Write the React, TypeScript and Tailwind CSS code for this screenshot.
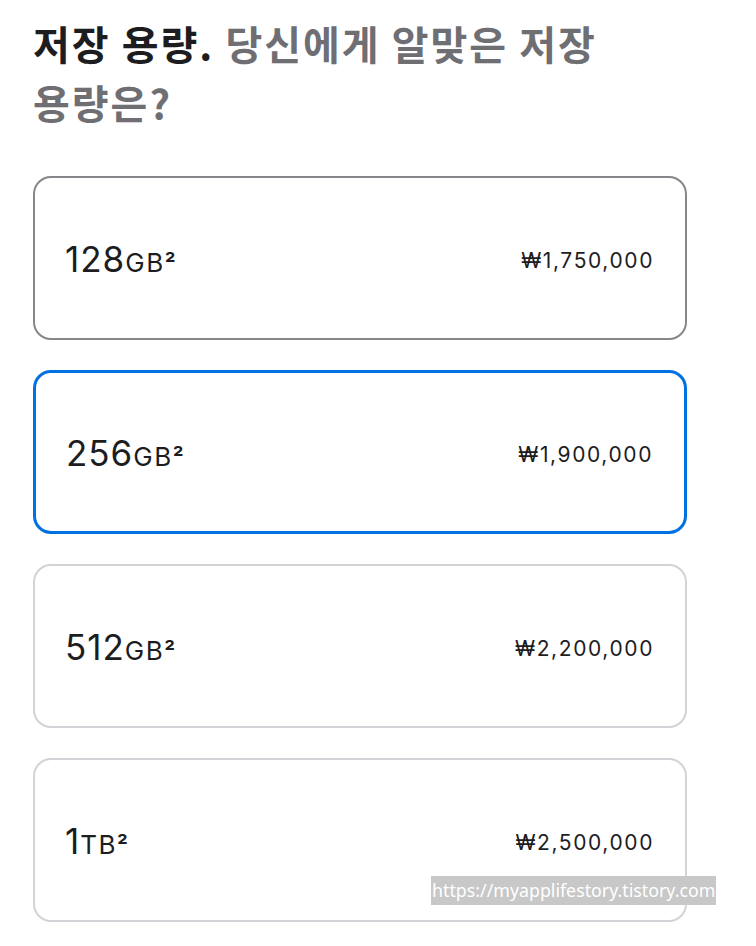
import React, { useState } from 'react';

type Option = {
    id: string;
    size: string;
    unit: string;
    price: string;
};

const options: Option[] = [
    { id: '128', size: '128', unit: 'GB', price: '₩1,750,000' },
    { id: '256', size: '256', unit: 'GB', price: '₩1,900,000' },
    { id: '512', size: '512', unit: 'GB', price: '₩2,200,000' },
    { id: '1tb', size: '1', unit: 'TB', price: '₩2,500,000' },
];

const App: React.FC = () => {
    const [selected, setSelected] = useState('256');
    const hovered = '128';

    return (
        <div className="relative min-h-[946px] bg-white px-[33px] pt-[14px] font-['Inter','Noto_Sans_CJK_KR',sans-serif] text-[#1d1d1f]">
            <h2 className="w-[620px] text-[40px] font-bold leading-[59px] tracking-[2px] font-['Noto_Sans_CJK_KR','Inter',sans-serif]">
                <span className="text-[#1d1d1f]">저장 용량.</span>{' '}
                <span className="text-[#6e6e73]">
                    당신에게 알맞은 저장
                    <br />
                    용량은?
                </span>
            </h2>

            <div className="mt-[44px] flex w-[654px] flex-col gap-[30px]">
                {options.map((opt) => {
                    const isSelected = selected === opt.id;
                    const border = isSelected
                        ? 'border-[3px] border-[#0071e3]'
                        : opt.id === hovered
                        ? 'border-2 border-[#86868b]'
                        : 'border-2 border-[#d2d2d7]';
                    return (
                        <button
                            key={opt.id}
                            onClick={() => setSelected(opt.id)}
                            className={`flex h-[164px] items-center justify-between rounded-[18px] bg-white pl-[30px] pr-[31px] text-left ${border}`}
                        >
                            <span className="flex items-baseline pt-[2px]">
                                <span className="text-[35px] font-normal leading-none tracking-[1px]">{opt.size}</span>
                                <span className="text-[26px] font-normal leading-none tracking-[1.5px]">{opt.unit}</span>
                                <span className="text-[24px] font-semibold leading-none">²</span>
                            </span>
                            <span className="pt-[4px] text-[21px] font-normal leading-none tracking-[1.6px]">{opt.price}</span>
                        </button>
                    );
                })}
            </div>

            <div className="absolute left-[431px] top-[876px] bg-[#c8c8c8] px-[1px] py-[2px] text-[17.8px] leading-[25px] text-white font-['Noto_Sans','Noto_Sans_CJK_KR',sans-serif]">
                https://myapplifestory.tistory.com
            </div>
        </div>
    );
};

export default App;
